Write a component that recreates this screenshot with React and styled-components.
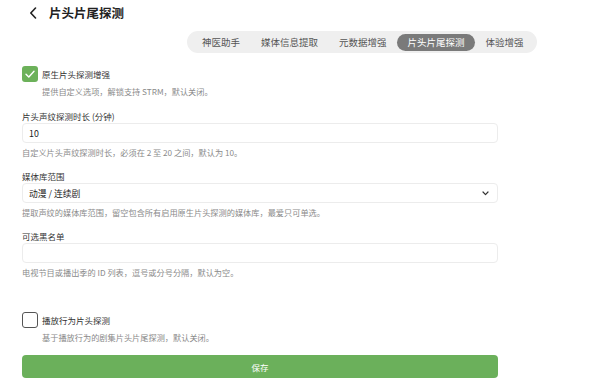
import React from "react";
import styled, { createGlobalStyle } from "styled-components";

const GlobalStyle = createGlobalStyle`
  html, body {
    margin: 0;
    padding: 0;
    background: #ffffff;
  }
  body {
    font-family: "Noto Sans CJK SC", "Noto Sans", sans-serif;
    color: #333;
    -webkit-font-smoothing: antialiased;
  }
  * { box-sizing: border-box; }
`;

const Page = styled.div`
  width: 600px;
  height: 383px;
  overflow: hidden;
`;

const Header = styled.div`
  display: flex;
  align-items: center;
  height: 26px;
  padding-left: 29px;
  gap: 12px;
`;

const BackButton = styled.button`
  display: flex;
  align-items: center;
  border: 0;
  padding: 0;
  background: none;
  cursor: pointer;
`;

const Title = styled.h1`
  margin: 0;
  font-size: 12.5px;
  line-height: 16px;
  font-weight: 700;
  color: #222;
`;

const TabsRow = styled.div`
  display: flex;
  justify-content: flex-end;
  width: 537px;
  margin-top: 5px;
`;

const Tabs = styled.div`
  display: flex;
  align-items: center;
  height: 22px;
  padding: 0 3px 0 4px;
  border-radius: 11px;
  background: #efefef;
`;

const Tab = styled.button`
  border: 0;
  height: 17px;
  padding: 0 10.5px;
  border-radius: 9px;
  font-family: inherit;
  font-size: 9.5px;
  line-height: 17px;
  color: ${(p) => (p.$active ? "#ffffff" : "#555")};
  background: ${(p) => (p.$active ? "#7a7a7a" : "transparent")};
  cursor: pointer;
`;

const Form = styled.div`
  width: 476px;
  margin-left: 22px;
  margin-top: 13px;
`;

const CheckRow = styled.label`
  display: flex;
  align-items: center;
  gap: 4px;
  height: 16px;
  margin-top: ${(p) => p.$top || 0}px;
`;

const Box = styled.span`
  display: flex;
  align-items: center;
  justify-content: center;
  width: 16px;
  height: 16px;
  border-radius: 3px;
  background: ${(p) => (p.$checked ? "#6cb15a" : "#fff")};
  border: ${(p) => (p.$checked ? "none" : "1.3px solid #555")};
`;

const CheckLabel = styled.span`
  font-size: 8.5px;
  line-height: 12px;
  color: #333;
`;

const Desc = styled.div`
  margin-top: 3px;
  margin-left: ${(p) => (p.$indent ? 20 : 0)}px;
  font-size: 8.2px;
  line-height: 12px;
  color: #8a8a8a;
  white-space: nowrap;
`;

const Field = styled.div`
  margin-top: ${(p) => p.$top}px;
`;

const Label = styled.div`
  font-size: 8.5px;
  line-height: 12px;
  color: #333;
  margin-bottom: 1px;
`;

const Input = styled.div`
  display: flex;
  align-items: center;
  justify-content: space-between;
  height: 20px;
  padding: 0 8px 0 6px;
  border: 1px solid #ececec;
  border-radius: 4px;
  background: #fff;
  font-size: 8.8px;
  color: #222;
`;

const SaveButton = styled.button`
  display: block;
  width: 476px;
  height: 23px;
  margin-top: 12px;
  border: 0;
  border-radius: 4px;
  background: #6bb05b;
  color: #fff;
  font-family: inherit;
  font-size: 8.5px;
  cursor: pointer;
`;

const tabs = ["神医助手", "媒体信息提取", "元数据增强", "片头片尾探测", "体验增强"];

export default function App() {
  return (
    <>
      <GlobalStyle />
      <Page>
        <Header>
          <BackButton>
            <svg width="8" height="12" viewBox="0 0 8 12">
              <path d="M6.5 1 L1.8 6 L6.5 11" fill="none" stroke="#222" strokeWidth="1.6" strokeLinecap="round" strokeLinejoin="round" />
            </svg>
          </BackButton>
          <Title>片头片尾探测</Title>
        </Header>
        <TabsRow>
          <Tabs>
            {tabs.map((t) => (
              <Tab key={t} $active={t === "片头片尾探测"}>{t}</Tab>
            ))}
          </Tabs>
        </TabsRow>
        <Form>
          <CheckRow>
            <Box $checked>
              <svg width="10" height="8" viewBox="0 0 10 8">
                <path d="M1 4.2 L3.8 7 L9 1.2" fill="none" stroke="#fff" strokeWidth="1.4" strokeLinecap="round" strokeLinejoin="round" />
              </svg>
            </Box>
            <CheckLabel>原生片头探测增强</CheckLabel>
          </CheckRow>
          <Desc $indent>提供自定义选项，解锁支持 STRM，默认关闭。</Desc>

          <Field $top={13}>
            <Label>片头声纹探测时长 (分钟)</Label>
            <Input>10</Input>
            <Desc>自定义片头声纹探测时长，必须在 2 至 20 之间，默认为 10。</Desc>
          </Field>

          <Field $top={12}>
            <Label>媒体库范围</Label>
            <Input>
              动漫 / 连续剧
              <svg width="7" height="5" viewBox="0 0 7 5">
                <path d="M1 1 L3.5 3.6 L6 1" fill="none" stroke="#333" strokeWidth="1.2" strokeLinecap="round" strokeLinejoin="round" />
              </svg>
            </Input>
            <Desc>提取声纹的媒体库范围，留空包含所有启用原生片头探测的媒体库，最爱只可单选。</Desc>
          </Field>

          <Field $top={12}>
            <Label>可选黑名单</Label>
            <Input />
            <Desc>电视节目或播出季的 ID 列表，逗号或分号分隔，默认为空。</Desc>
          </Field>

          <CheckRow $top={34}>
            <Box />
            <CheckLabel>播放行为片头探测</CheckLabel>
          </CheckRow>
          <Desc $indent>基于播放行为的剧集片头片尾探测，默认关闭。</Desc>

          <SaveButton>保存</SaveButton>
        </Form>
      </Page>
    </>
  );
}
